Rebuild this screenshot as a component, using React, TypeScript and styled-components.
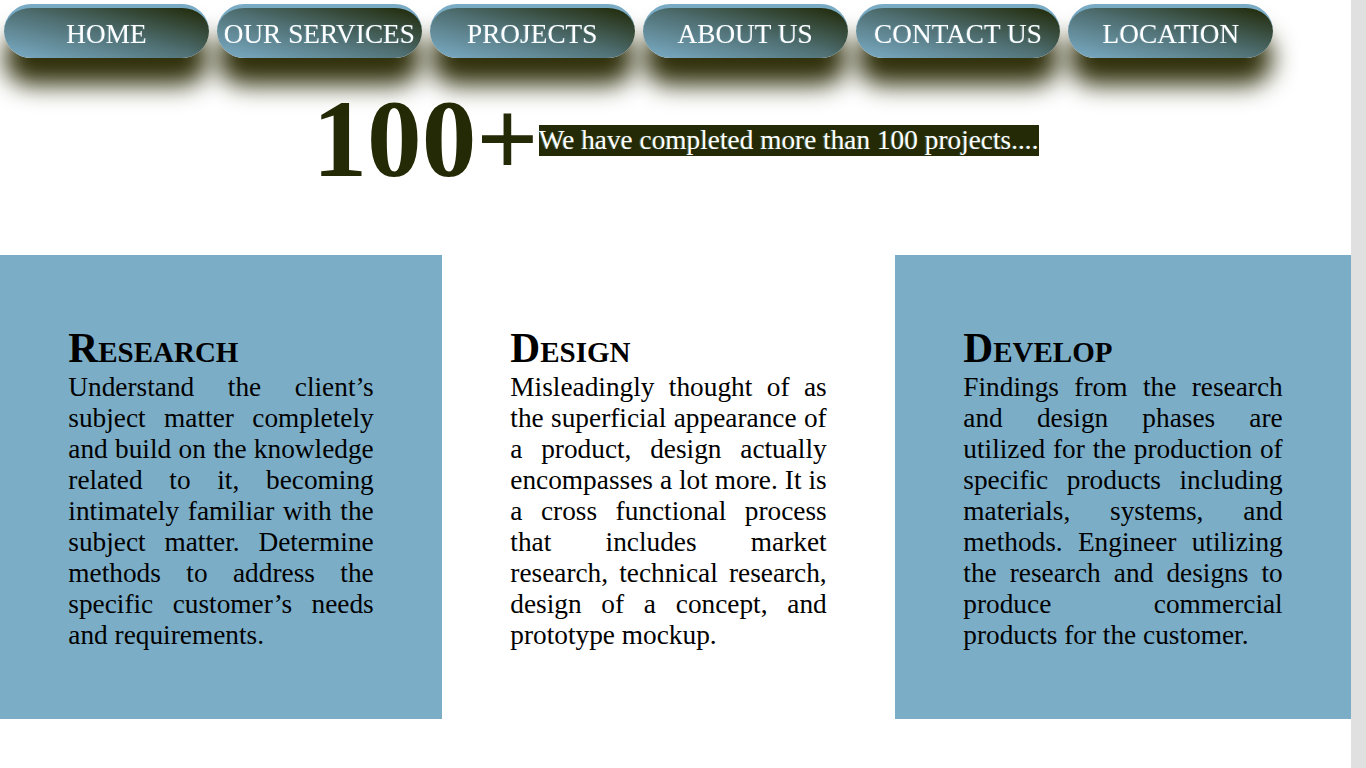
import React, { useLayoutEffect, useRef } from "react";
import styled, { createGlobalStyle } from "styled-components";

const SCROLL_TOP = 2270;

const GlobalStyle = createGlobalStyle`
  html, body { margin: 0; padding: 0; overflow: hidden; }
  body {
    background: #ffffff;
    font-family: "Liberation Serif", "Times New Roman", serif;
    font-size: 2vw;
    color: #000;
  }
`;

/* Scrolling page area; the right border stands in for the scrollbar gutter
   (15px), which the headless browser does not paint. */
const Viewport = styled.div`
  box-sizing: border-box;
  height: 100vh;
  overflow-y: scroll;
  overflow-x: hidden;
  scroll-behavior: auto;
  border-right: 15px solid #e0e0e0;
`;

const Nav = styled.nav`
  position: fixed;
  top: 4px;
  left: 4px;
  display: flex;
  gap: 8px;
  z-index: 10;
`;

const NavButton = styled.a`
  box-sizing: border-box;
  width: 15vw;
  height: 54px;
  padding-top: 2px;
  display: flex;
  align-items: center;
  justify-content: center;
  border-top: 4px solid #7aabc4;
  border-radius: 30px;
  background: linear-gradient(to top right, #7badc7 0%, #4f6f72 50%, #1f2704 100%);
  box-shadow: 0 27px 24px #30300c;
  color: #ffffff;
  font-size: 2vw;
  line-height: normal;
  text-decoration: none;
  text-shadow: -1px 0 1px rgba(122, 173, 199, 0.55);
  white-space: nowrap;
`;

const Intro = styled.section`
  height: ${SCROLL_TOP + 77}px;
`;

const Stats = styled.section`
  display: flex;
  justify-content: center;
  align-items: center;
`;

const BigNumber = styled.span`
  font-size: 8vw;
  font-weight: bold;
  color: #232a05;
  line-height: normal;
`;

const Tagline = styled.span`
  background: #232a05;
  color: #ffffff;
  font-size: 2vw;
  line-height: normal;
  text-shadow: -1px 0 1px rgba(122, 173, 199, 0.5);
`;

const Cards = styled.section`
  margin-top: 52px;
  display: grid;
  grid-template-columns: 442px 453px 1fr;
`;

const Card = styled.article<{ $tinted: boolean }>`
  padding: calc(5vw + 1px) 5vw calc(5vw - 1px);
  background: ${(p) => (p.$tinted ? "#7badc7" : "#ffffff")};
`;

const CardTitle = styled.h2`
  margin: 0;
  font-size: 41.4px;
  line-height: normal;
  font-weight: bold;
  font-variant: small-caps;
  color: #000;
`;

const CardText = styled.p`
  margin: 0;
  font-size: 2vw;
  line-height: normal;
  text-align: justify;
  color: #000;
`;

const Footer = styled.footer`
  height: 1695px;
`;

const links = ["HOME", "OUR SERVICES", "PROJECTS", "ABOUT US", "CONTACT US", "LOCATION"];

const cards = [
  {
    title: "Research",
    tinted: true,
    text: "Understand the client’s subject matter completely and build on the knowledge related to it, becoming intimately familiar with the subject matter. Determine methods to address the specific customer’s needs and requirements.",
  },
  {
    title: "Design",
    tinted: false,
    text: "Misleadingly thought of as the superficial appearance of a product, design actually encompasses a lot more. It is a cross functional process that includes market research, technical research, design of a concept, and prototype mockup.",
  },
  {
    title: "Develop",
    tinted: true,
    text: "Findings from the research and design phases are utilized for the production of specific products including materials, systems, and methods. Engineer utilizing the research and designs to produce commercial products for the customer.",
  },
];

export default function App() {
  const ref = useRef<HTMLDivElement>(null);

  useLayoutEffect(() => {
    const el = ref.current;
    if (!el) return;
    el.scrollTop = SCROLL_TOP;
    const id = requestAnimationFrame(() => {
      el.scrollTop = SCROLL_TOP;
    });
    return () => cancelAnimationFrame(id);
  }, []);

  return (
    <>
      <GlobalStyle />
      <Viewport ref={ref}>
        <Nav>
          {links.map((l) => (
            <NavButton key={l} href="#">
              {l}
            </NavButton>
          ))}
        </Nav>
        <main>
          <Intro />
          <Stats>
            <BigNumber>100+</BigNumber>
            <Tagline>We have completed more than 100 projects....</Tagline>
          </Stats>
          <Cards>
            {cards.map((c) => (
              <Card key={c.title} $tinted={c.tinted}>
                <CardTitle>{c.title}</CardTitle>
                <CardText>{c.text}</CardText>
              </Card>
            ))}
          </Cards>
          <Footer />
        </main>
      </Viewport>
    </>
  );
}
